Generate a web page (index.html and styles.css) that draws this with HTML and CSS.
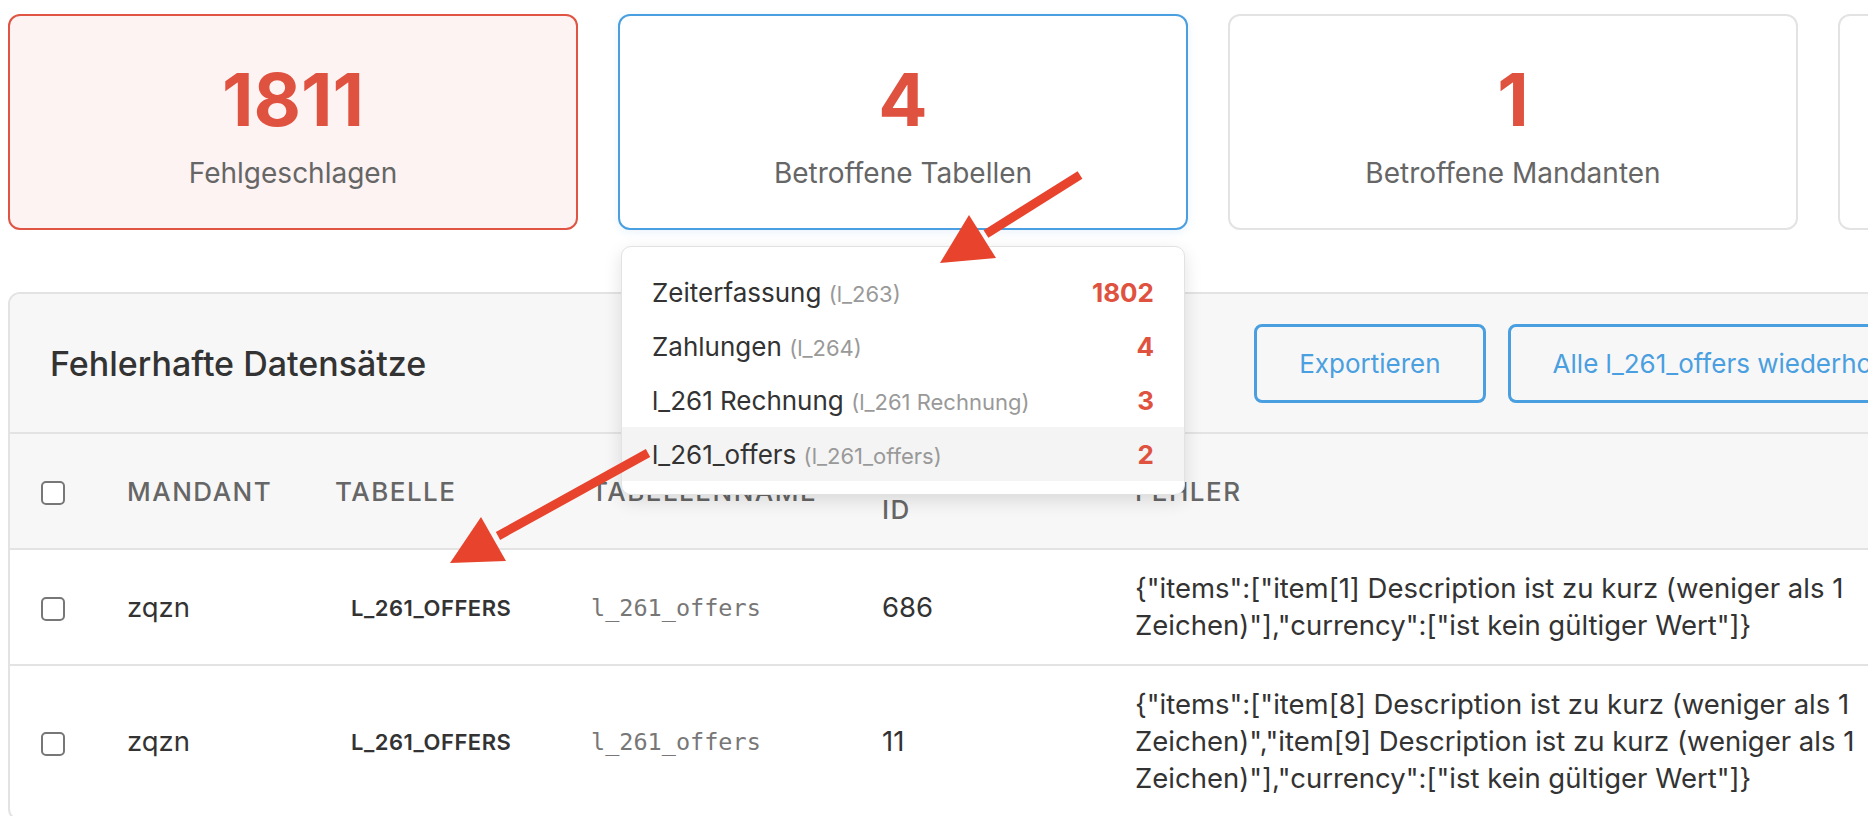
FILE: index.html
```html
<!DOCTYPE html>
<html lang="de">
<head>
    <meta charset="UTF-8">
    <meta name="viewport" content="width=device-width, initial-scale=1.0">
    <title>Fehlerhafte Datensätze</title>
    <link rel="stylesheet" href="styles.css">
</head>
<body>

<!-- Kennzahlen -->
<div class="stats">
    <div class="stat stat-failed">
        <div class="stat-value">1811</div>
        <div class="stat-label">Fehlgeschlagen</div>
    </div>
    <div class="stat stat-active">
        <div class="stat-value">4</div>
        <div class="stat-label">Betroffene Tabellen</div>

        <!-- Auswahl der Tabellen -->
        <div class="dropdown">
            <div class="dropdown-item">
                <span>Zeiterfassung <small>(l_263)</small></span>
                <strong>1802</strong>
            </div>
            <div class="dropdown-item">
                <span>Zahlungen <small>(l_264)</small></span>
                <strong>4</strong>
            </div>
            <div class="dropdown-item">
                <span>l_261 Rechnung <small>(l_261 Rechnung)</small></span>
                <strong>3</strong>
            </div>
            <div class="dropdown-item selected">
                <span>l_261_offers <small>(l_261_offers)</small></span>
                <strong>2</strong>
            </div>
        </div>
    </div>
    <div class="stat">
        <div class="stat-value">1</div>
        <div class="stat-label">Betroffene Mandanten</div>
    </div>
    <div class="stat">
        <div class="stat-value">0</div>
        <div class="stat-label">Erneut versucht</div>
    </div>
</div>

<!-- Liste der Datensätze -->
<section class="panel">
    <div class="panel-head">
        <h2>Fehlerhafte Datensätze</h2>
        <div class="actions">
            <button class="btn-outline">Exportieren</button>
            <button class="btn-outline">Alle l_261_offers wiederholen</button>
        </div>
    </div>
    <table class="records">
        <colgroup>
            <col class="col-check">
            <col class="col-client">
            <col class="col-table">
            <col class="col-name">
            <col class="col-id">
            <col class="col-error">
            <col class="col-actions">
        </colgroup>
        <thead>
            <tr>
                <th><span class="checkbox"></span></th>
                <th>Mandant</th>
                <th>Tabelle</th>
                <th>Tabellenname</th>
                <th>Datensatz ID</th>
                <th>Fehler</th>
                <th>Aktionen</th>
            </tr>
        </thead>
        <tbody>
            <tr>
                <td><span class="checkbox"></span></td>
                <td>zqzn</td>
                <td><span class="badge">l_261_offers</span></td>
                <td><code>l_261_offers</code></td>
                <td>686</td>
                <td>{"items":["item[1] Description ist zu kurz (weniger als 1 Zeichen)"],"currency":["ist kein gültiger Wert"]}</td>
                <td></td>
            </tr>
            <tr>
                <td><span class="checkbox"></span></td>
                <td>zqzn</td>
                <td><span class="badge">l_261_offers</span></td>
                <td><code>l_261_offers</code></td>
                <td>11</td>
                <td>{"items":["item[8] Description ist zu kurz (weniger als 1 Zeichen)","item[9] Description ist zu kurz (weniger als 1 Zeichen)"],"currency":["ist kein gültiger Wert"]}</td>
                <td></td>
            </tr>
        </tbody>
    </table>
</section>

<!-- Markierungen -->
<svg class="marks" width="1876" height="816" viewBox="0 0 1876 816">
    <line x1="1080" y1="175" x2="986" y2="234" />
    <polygon points="940,263 996,258 969,215" />
    <line x1="648" y1="453" x2="498" y2="536" />
    <polygon points="450,563 506,561 481,517" />
</svg>

</body>
</html>
```

FILE: styles.css
```css
body {
    margin: 8px;
    font-family: Inter, "Noto Sans", sans-serif;
    color: #333;
    background: #fff;
    overflow: hidden;
}

/* Kennzahlen */
.stats {
    display: grid;
    grid-template-columns: repeat(4, 570px);
    gap: 40px;
    margin-top: 6px;
}
.stat {
    position: relative;
    height: 216px;
    box-sizing: border-box;
    padding-top: 47px;
    border: 2px solid #e3e3e3;
    border-radius: 12px;
    background: #fff;
    text-align: center;
}
.stat-failed {
    background: #fdf3f2;
    border-color: #e05443;
}
.stat-active {
    border-color: #4a9fe0;
    box-shadow: 0 2px 10px rgba(74, 159, 224, 0.12);
    z-index: 10;
}
.stat-value {
    font-size: 73px;
    font-weight: 700;
    line-height: 1;
    color: #e05240;
}
.stat-label {
    margin-top: 19px;
    font-size: 28px;
    line-height: 36px;
    color: #666;
}

/* Auswahl */
.dropdown {
    position: absolute;
    top: calc(100% + 18px);
    left: 1px;
    width: 564px;
    box-sizing: border-box;
    padding: 18px 0 13px;
    border: 1px solid #e2e2e2;
    border-radius: 10px;
    background: #fff;
    box-shadow: 0 6px 18px rgba(0, 0, 0, 0.12);
    text-align: left;
}
.dropdown-item {
    display: flex;
    justify-content: space-between;
    align-items: center;
    height: 54px;
    padding: 0 30px;
    font-size: 26px;
    color: #333;
}
.dropdown-item small {
    font-size: 22px;
    color: #999;
}
.dropdown-item strong {
    font-weight: 700;
    color: #e05240;
}
.dropdown-item.selected {
    background: #f4f4f4;
}

/* Liste */
.panel {
    width: 1984px;
    margin-top: 62px;
    border: 2px solid #e3e3e3;
    border-radius: 12px;
    background: #fff;
    overflow: hidden;
}
.panel-head {
    display: flex;
    align-items: center;
    gap: 22px;
    height: 138px;
    padding: 0 40px;
    background: #f7f7f7;
    border-bottom: 2px solid #e3e3e3;
}
.panel-head h2 {
    margin: 0 auto 0 0;
    font-size: 34px;
    font-weight: 500;
    color: #333;
}
.actions {
    display: flex;
    gap: 22px;
}
.btn-outline {
    height: 79px;
    padding: 0 42px;
    border: 3px solid #4a9fe0;
    border-radius: 8px;
    background: transparent;
    color: #4a9fe0;
    font-family: inherit;
    font-size: 26px;
    white-space: nowrap;
}

.records {
    border-collapse: collapse;
    table-layout: fixed;
    width: 1980px;
}
.col-check { width: 85px; }
.col-client { width: 208px; }
.col-table { width: 256px; }
.col-name { width: 291px; }
.col-id { width: 253px; }
.col-error { width: 800px; }
.records th,
.records td {
    padding: 20px 32px;
    line-height: 37px;
    text-align: left;
    vertical-align: middle;
    border-bottom: 2px solid #e3e3e3;
}
.records th:first-child,
.records td:first-child {
    padding-left: 31px;
    padding-right: 30px;
}
.records th {
    background: #f7f7f7;
    font-size: 26px;
    font-weight: 500;
    letter-spacing: 1.5px;
    text-transform: uppercase;
    color: #666;
}
.records td {
    font-size: 27.5px;
    color: #333;
}
.checkbox {
    display: inline-block;
    width: 24px;
    height: 24px;
    box-sizing: border-box;
    border: 2px solid #777;
    border-radius: 5px;
    background: #fff;
    vertical-align: middle;
}
.badge {
    display: inline-block;
    padding: 0 16px;
    font-size: 22px;
    font-weight: 600;
    letter-spacing: 0.5px;
    text-transform: uppercase;
    color: #333;
}
.records code {
    font-family: "DejaVu Sans Mono", monospace;
    font-size: 23.5px;
    color: #777;
}

/* Markierungen */
.marks {
    position: absolute;
    top: 0;
    left: 0;
    z-index: 20;
    pointer-events: none;
}
.marks line {
    stroke: #e8432c;
    stroke-width: 9;
}
.marks polygon {
    fill: #e8432c;
}
```
